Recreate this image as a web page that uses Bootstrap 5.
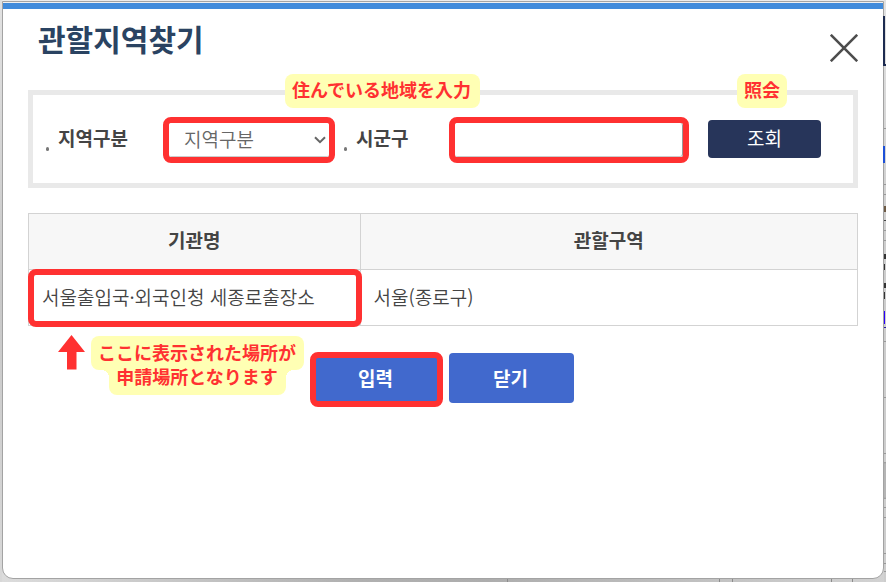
<!DOCTYPE html>
<html lang="ko">
<head>
<meta charset="utf-8">
<meta name="viewport" content="width=device-width, initial-scale=1">
<title>관할지역찾기</title>
<link rel="stylesheet" href="https://cdn.jsdelivr.net/npm/bootstrap@5.3.0/dist/css/bootstrap.min.css">
<script src="https://cdn.jsdelivr.net/npm/bootstrap@5.3.0/dist/js/bootstrap.bundle.min.js"></script>
<style>
  :root { --ink: #444; --red: #ff3131; --memo: #ffffb4; --rule: #d3d3d3; }
  body {
    font-family: "Noto Sans CJK KR", sans-serif;
    font-size: 19px; line-height: 28px; color: var(--ink);
    background: linear-gradient(90deg, #dcdcdc, #b0b0b0 40%, #adadad 55%, #d2d2d2);
    padding: 1px 2px 3px;
  }
  /* page visible behind the window */
  .behind-top { position: absolute; inset: 0 0 auto; height: 30px; background: #ececec; }
  .behind-left { position: absolute; inset: 0 auto 0 0; width: 2px; background: linear-gradient(#e2e2e2, #c8c8c8 50%, #d8d8d8); }
  .behind-right {
    position: absolute; inset: 0 0 0 auto; width: 3px; z-index: 1;
    background:
      linear-gradient(#1d2b50, #1d2b50) 0 16px / 2px 50px,
      linear-gradient(#1d2b50, #1d2b50) 0 64px / 3px 2px,
      linear-gradient(#1c50d8, #1c50d8) 0 146px / 2px 17px,
      linear-gradient(#6d5a45, #6d5a45) 1px 206px / 2px 6px,
      linear-gradient(#444, #444) 1px 220px / 2px 1px,
      linear-gradient(#333, #333) 1px 254px / 2px 5px,
      linear-gradient(#333, #333) 1px 264px / 1px 6px,
      linear-gradient(#333, #333) 1px 283px / 2px 5px,
      linear-gradient(#333, #333) 1px 292px / 1px 7px,
      linear-gradient(#2a00ff, #2a00ff) 1px 311px / 1px 13px,
      linear-gradient(#2a1ba0, #2a1ba0) 1px 327px / 2px 1px,
      linear-gradient(#999, #999) 1px 128px / 2px 1px,
      linear-gradient(#999, #999) 1px 184px / 2px 1px,
      linear-gradient(#999, #999) 1px 194px / 2px 1px,
      linear-gradient(#999, #999) 1px 230px / 2px 1px,
      linear-gradient(#999, #999) 1px 240px / 2px 1px,
      linear-gradient(#999, #999) 1px 341px / 2px 1px,
      linear-gradient(#999, #999) 1px 397px / 2px 1px,
      linear-gradient(#999, #999) 1px 453px / 2px 1px,
      linear-gradient(#999, #b5b5b5 2px, #b5b5b5 35px, #999) 1px 462px / 2px 37px,
      linear-gradient(#999, #999) 1px 507px / 2px 1px,
      linear-gradient(#999, #999) 1px 517px / 2px 1px,
      linear-gradient(#999, #999) 1px 553px / 2px 1px,
      linear-gradient(#999, #999) 1px 563px / 2px 1px,
      linear-gradient(#999, #999) 1px 571px / 2px 1px,
      linear-gradient(#e2e2e2, #cdcdcd 40%, #cdcdcd) 1px 0 / 2px 100%;
    background-repeat: no-repeat;
  }
  .behind-bottom {
    position: absolute; inset: auto 0 0 0; height: 3px;
    background:
      linear-gradient(#8c8c8c, #8c8c8c) 507px 0 / 1px 3px,
      linear-gradient(#8c8c8c, #8c8c8c) 719px 0 / 1px 3px,
      linear-gradient(#8c8c8c, #8c8c8c) 732px 0 / 1px 3px,
      linear-gradient(#8c8c8c, #8c8c8c) 831px 0 / 1px 3px,
      linear-gradient(#8c8c8c, #8c8c8c) 852px 0 / 1px 3px;
    background-repeat: no-repeat;
  }
  .finder {
    min-height: calc(100vh - 4px);
    background: #fff; border: 1px solid #a3a3a3;
    border-radius: 0 0 11px 11px;
  }
  .finder-bar { height: 7px; background: #418bdb; border-top: 1px solid #f0f0f0; }
  .finder-body { padding: 7px 25px 24px; }
  .finder-title { font-size: 30px; line-height: 44px; color: #2a4362; margin-left: 10px; }
  .finder-head { margin-bottom: 28px; }
  .finder-close { margin-top: 18px; line-height: 0; }
  .finder-close svg { width: 28px; height: 28px; }
  .search-panel { border: 5px solid #e9e9e9; padding: 22px 32px 20px 13px; }
  .field-name { position: relative; padding-left: 12px; line-height: 38px; padding-bottom: 4px; }
  .field-name::before {
    content: ""; position: absolute; left: 0; bottom: 10px;
    width: 3px; height: 4px; border-radius: 2px; background: #777;
  }
  .name-region { width: 117px; }
  .name-district { width: 105px; margin-left: 9px; }
  .red-ring { border: 6px solid var(--red); border-radius: 8px; }
  .region-box { width: 172px; }
  .region-box select, .district-box input {
    display: block; width: 100%; height: 34px; border: 0; outline: 0;
    border-bottom: 1px solid #ccc; border-radius: 3px; background: #fff;
  }
  .region-box select {
    appearance: none; color: #666; font-weight: 350; padding: 0 15px 2px; line-height: 28px;
  }
  .region-box svg { position: absolute; right: 3px; top: 13px; width: 12px; height: 8px; pointer-events: none; }
  .district-box input { border-right: 1px solid #999; padding: 0 8px; }
  .btn-search {
    width: 113px; height: 38px; padding: 0 0 2px; border: 0; border-radius: 4px;
    background: #27355a; color: #fff; font-size: 19px; line-height: 36px;
  }
  .search-action { margin: 0 0 2px 19px; }
  .memo {
    position: absolute; z-index: 2; padding: 0 7px 4px; border-radius: 8px;
    font-family: "Noto Sans CJK JP", sans-serif; font-size: 18px; line-height: 30px;
    font-weight: 700; color: var(--red); background: var(--memo); white-space: nowrap;
  }
  .memo-area { left: 252px; top: -21px; padding-right: 9px; }
  .memo-search { left: 29px; top: -46px; }
  .agencies { margin: 25px 0 27px; border: 1px solid var(--rule); width: 100%; table-layout: fixed; }
  .agencies th, .agencies td { height: 56px; border: 1px solid var(--rule); padding: 0 13px 2px; }
  .agencies th { width: 60%; background: #f7f7f7; text-align: center; padding-bottom: 4px; }
  .agencies th:first-child { width: 40%; }
  .agencies td { position: relative; font-weight: 350; }
  .ringed::after {
    content: ""; position: absolute; inset: -1px -2px -2px -1px;
    border: 6px solid var(--red); border-radius: 8px; pointer-events: none;
  }
  .btn-main {
    position: relative; width: 125px; height: 50px; padding: 0 2px 0 0; border: 0; border-radius: 4px;
    background: #4169cd; color: #fff; font-size: 19px; font-weight: 700;
  }
  .btn-main.ringed::after { inset: -1px -4px -4px; }
  .btn:hover, .btn:active { color: #fff !important; background: #35569f !important; }
  .finder-actions { gap: 10px; padding-left: 2px; }
  .place-note { position: absolute; left: 30px; top: -18px; }
  .place-note svg { width: 27px; height: 35px; }
  .place-note p {
    position: relative; z-index: 0; margin: 1px 0 0 6px; padding: 4px 8px 7px 7px;
    text-align: center; white-space: nowrap;
    font-family: "Noto Sans CJK JP", sans-serif; font-size: 18px; line-height: 24px;
    font-weight: 700; color: var(--red);
    background:
      radial-gradient(circle at 0 100%, transparent 8px, var(--memo) 8px) 10px 34px / 8px 8px,
      radial-gradient(circle at 100% 100%, transparent 8px, var(--memo) 8px) right 10px top 34px / 8px 8px;
    background-repeat: no-repeat;
  }
  .place-note p::before, .place-note p::after {
    content: ""; position: absolute; z-index: -1; border-radius: 8px; background: var(--memo);
  }
  .place-note p::before { inset: 0 0 auto; height: 34px; }
  .place-note p::after { inset: 24px 18px 0; }
</style>
</head>
<body class="position-relative">
<div class="behind-top"></div>
<div class="behind-left"></div>
<div class="behind-right"></div>
<div class="behind-bottom"></div>
<main class="finder position-relative">
  <div class="finder-bar"></div>
  <div class="finder-body">
    <header class="finder-head d-flex justify-content-between align-items-start">
      <h1 class="finder-title fw-bold mb-0">관할지역찾기</h1>
      <button type="button" class="finder-close border-0 bg-transparent p-0" aria-label="닫기">
        <svg viewBox="0 0 28 28" fill="none" stroke="#4d4d4d" stroke-width="2.6"><path d="M.8.8 27.2 27.2M27.2.8.8 27.2"/></svg>
      </button>
    </header>

    <form class="search-panel position-relative d-flex align-items-center">
      <span class="memo memo-area" lang="ja">住んでいる地域を入力</span>
      <label class="field-name name-region fw-bold flex-shrink-0" for="region">지역구분</label>
      <div class="region-box red-ring position-relative flex-shrink-0">
        <select id="region"><option>지역구분</option></select>
        <svg viewBox="0 0 12 8" fill="none" stroke="#666" stroke-width="2"><path d="M1 1.2 6 6.2 11 1.2"/></svg>
      </div>
      <label class="field-name name-district fw-bold flex-shrink-0" for="district">시군구</label>
      <div class="district-box red-ring flex-grow-1"><input type="text" id="district"></div>
      <div class="search-action position-relative flex-shrink-0">
        <span class="memo memo-search" lang="ja">照会</span>
        <button type="button" class="btn btn-search d-block">조회</button>
      </div>
    </form>

    <table class="agencies">
      <thead><tr><th scope="col">기관명</th><th scope="col">관할구역</th></tr></thead>
      <tbody><tr><td class="ringed">서울출입국·외국인청 세종로출장소</td><td>서울(종로구)</td></tr></tbody>
    </table>

    <div class="position-relative d-flex justify-content-center">
      <div class="place-note d-flex align-items-start">
        <svg viewBox="0 0 27 35" fill="#ff3131"><path d="M13.5 0 27 17H18.500V34.500H9V17H0z"/></svg>
        <p lang="ja">ここに表示された場所が<br>申請場所となります</p>
      </div>
      <div class="finder-actions d-flex">
        <button type="button" class="btn btn-main ringed">입력</button>
        <button type="button" class="btn btn-main">닫기</button>
      </div>
    </div>
  </div>
</main>
</body>
</html>
